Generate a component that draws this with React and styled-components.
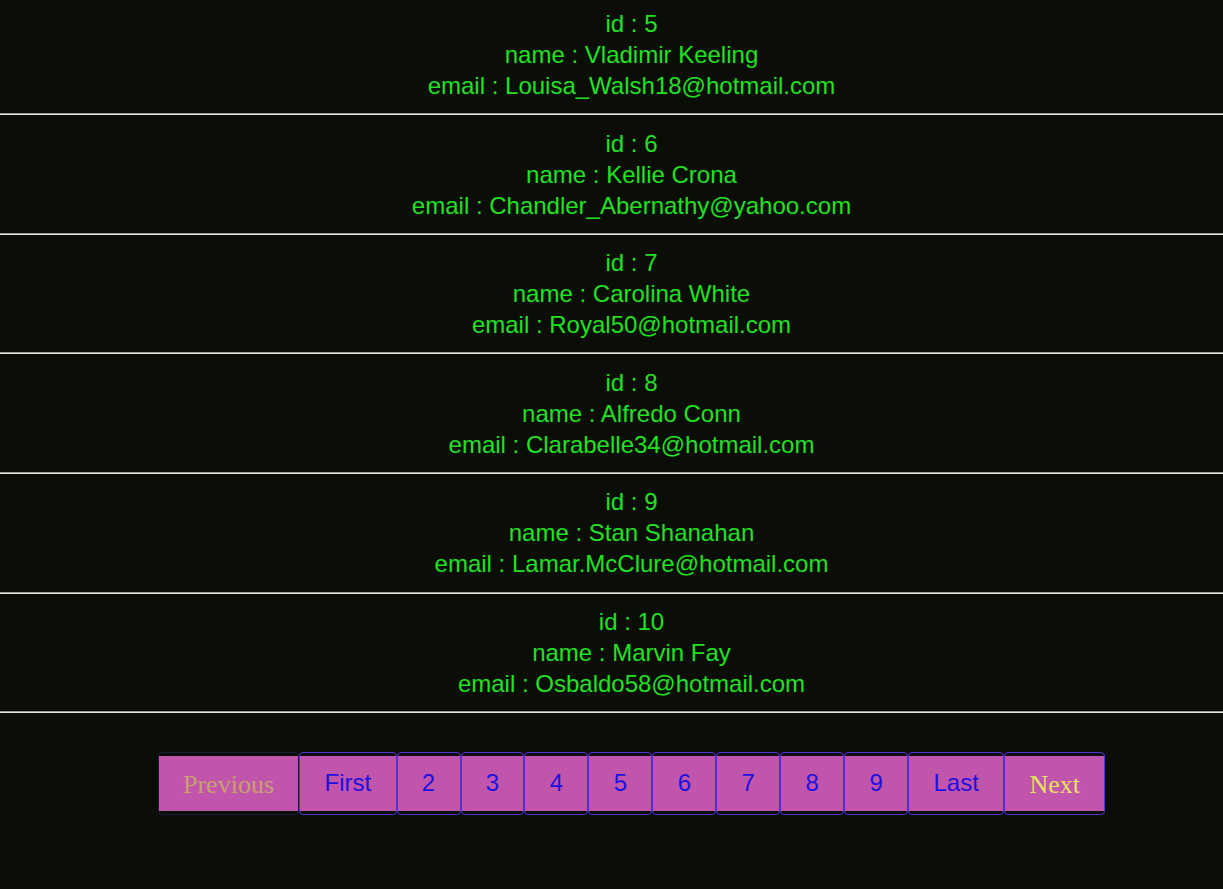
import React from "react";
import styled, { createGlobalStyle } from "styled-components";

const GlobalStyle = createGlobalStyle`
  body {
    margin: 0;
    padding-top: 8px;
    background-color: #0a0e07;
    font-family: "Liberation Sans", Arial, sans-serif;
  }
`;

const users = [
  { id: 5, name: "Vladimir Keeling", email: "Louisa_Walsh18@hotmail.com" },
  { id: 6, name: "Kellie Crona", email: "Chandler_Abernathy@yahoo.com" },
  { id: 7, name: "Carolina White", email: "Royal50@hotmail.com" },
  { id: 8, name: "Alfredo Conn", email: "Clarabelle34@hotmail.com" },
  { id: 9, name: "Stan Shanahan", email: "Lamar.McClure@hotmail.com" },
  { id: 10, name: "Marvin Fay", email: "Osbaldo58@hotmail.com" },
];

const pages = ["2", "3", "4", "5", "6", "7", "8", "9"];

const UserCard = styled.ul`
  list-style: none;
  margin: 0;
  padding: 0 0 0 40px;
  text-align: center;
  color: #22e022;
  font-size: 24px;
  line-height: 31px;
`;

const Line = styled.li``;

const Divider = styled.hr`
  margin: 12.3px 0;
  border: none;
  border-top: 1px solid #9a9a92;
  border-bottom: 1px solid #e8e8e2;
  height: 0;
`;

const Pager = styled.ul`
  display: flex;
  justify-content: center;
  list-style: none;
  margin: 39px 0 0;
  padding: 0 0 0 40px;
`;

const PageItem = styled.li`
  border: 1px solid ${(p) => (p.$disabled ? "#1c1a3e" : "#5533d0")};
  border-radius: 4px;
  padding: 3px 0;
  display: flex;
`;

const PageLink = styled.a`
  display: block;
  background: #c055ab;
  padding: 12px 24.3px;
  height: 31px;
  line-height: 31px;
  font-size: ${(p) => (p.$serif ? "26px" : "24px")};
  font-family: ${(p) =>
    p.$serif
      ? '"Liberation Serif", "Times New Roman", serif'
      : '"Liberation Sans", Arial, sans-serif'};
  color: ${(p) => p.$color || "#1f10e0"};
  cursor: pointer;
  padding-top: ${(p) => (p.$serif ? "13px" : "11px")};
  padding-bottom: ${(p) => (p.$serif ? "11px" : "13px")};
`;

export default function App() {
  return (
    <>
      <GlobalStyle />
      {users.map((u) => (
        <React.Fragment key={u.id}>
          <UserCard>
            <Line>id : {u.id}</Line>
            <Line>name : {u.name}</Line>
            <Line>email : {u.email}</Line>
          </UserCard>
          <Divider />
        </React.Fragment>
      ))}
      <Pager>
        <PageItem $disabled>
          <PageLink $serif $color="#c9a070">
            Previous
          </PageLink>
        </PageItem>
        <PageItem>
          <PageLink>First</PageLink>
        </PageItem>
        {pages.map((n) => (
          <PageItem key={n}>
            <PageLink>{n}</PageLink>
          </PageItem>
        ))}
        <PageItem>
          <PageLink>Last</PageLink>
        </PageItem>
        <PageItem>
          <PageLink $serif $color="#e8e060">
            Next
          </PageLink>
        </PageItem>
      </Pager>
    </>
  );
}
